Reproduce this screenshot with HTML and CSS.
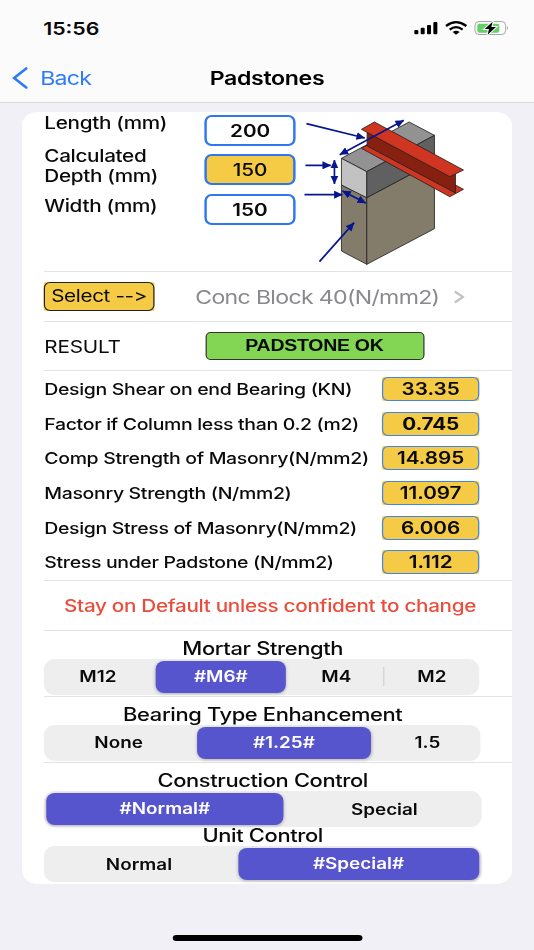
FILE: index.html
```html
<!DOCTYPE html>
<html lang="en">
<head>
  <meta charset="utf-8">
  <title>Padstones</title>
  <link rel="stylesheet" href="styles.css">
</head>
<body>
  <div class="screen">
    <header>
      <div class="status-bar">
        <span class="time">15:56</span>
        <svg class="status-icons" viewBox="435 60 295 48" preserveAspectRatio="none">
          <rect x="441" y="90" width="12" height="13" rx="3"/>
          <rect x="460" y="83" width="12" height="20" rx="3"/>
          <rect x="479" y="75" width="12" height="28" rx="3"/>
          <rect x="498" y="66" width="12" height="37" rx="3"/>
          <g fill="none" stroke="#000" stroke-width="7">
            <path d="M536 78 Q566 55 597 78"/>
            <path d="M547 89 Q566 74 586 89"/>
          </g>
          <path d="M556 96 Q566 88 577 96 L566 104 Z"/>
          <rect x="623" y="64.500" width="92" height="39" rx="12" fill="none" stroke="#a5a5a7" stroke-width="3"/>
          <rect x="630" y="71" width="66" height="27" rx="6" fill="#65cf68"/>
          <path d="M719 78 Q725 84 719 90 Z" fill="#a5a5a7"/>
          <path d="M676 65 L652 87 H665 L661 104 L686 81 H672 Z" stroke="#fbfbfc" stroke-width="6" paint-order="stroke"/>
        </svg>
      </div>
      <nav>
        <a class="back" href="#">
          <svg viewBox="0 0 16 22" preserveAspectRatio="none"><path d="M14.200 1.500 L2 11 L14.200 20.500"/></svg>
          <span>Back</span>
        </a>
        <h1>Padstones</h1>
      </nav>
    </header>

    <main class="card">
      <section class="sizes">
        <div class="size-labels">
          <label for="length">Length (mm)</label>
          <label for="depth">Calculated<br>Depth (mm)</label>
          <label for="width">Width (mm)</label>
        </div>
        <div class="size-inputs">
          <div class="field" id="length">200</div>
          <div class="field calculated" id="depth">150</div>
          <div class="field" id="width">150</div>
        </div>
        <svg class="diagram" viewBox="30 36 490 450" preserveAspectRatio="none">
          <defs>
            <marker id="arrow" viewBox="0 0 26 24" refX="25" refY="12" markerWidth="26" markerHeight="24" markerUnits="userSpaceOnUse" orient="auto-start-reverse">
              <path d="M0 0 L26 12 L0 24 Z" fill="#06168f"/>
            </marker>
          </defs>
          <g stroke="#222" stroke-width="2.500" stroke-linejoin="round">
            <!-- masonry -->
            <path d="M142 240 L218 278 V478 L142 438 Z" fill="#847c6a"/>
            <path d="M218 278 L421 170 V371 L218 478 Z" fill="#847c6a"/>
            <!-- padstone -->
            <path d="M142 160 L345 51 L421 91 L218 200 Z" fill="#929292"/>
            <path d="M142 160 L218 200 V278 L142 240 Z" fill="#c2c2c2"/>
            <path d="M218 200 L421 91 V170 L218 278 Z" fill="#606060"/>
            <!-- steel beam -->
            <path d="M202 130 L241 109 L508 253 L467 275 Z" fill="#cf3520"/>
            <path d="M219 82 L484 206 V264 L219 123 Z" fill="#862112"/>
            <path d="M202 73 L241 51 L508 195 L467 215 Z" fill="#cf3520"/>
          </g>
          <g stroke="#06168f" stroke-width="5" fill="none">
            <path d="M37 56 L212 99" marker-end="url(#arrow)"/>
            <path d="M34 181 H110" marker-end="url(#arrow)"/>
            <path d="M31 269 H145" marker-end="url(#arrow)"/>
            <path d="M76 470 L180 353" marker-end="url(#arrow)"/>
            <path d="M137 149 L329 46" marker-start="url(#arrow)" marker-end="url(#arrow)"/>
            <path d="M121 165 V237" marker-start="url(#arrow)" marker-end="url(#arrow)"/>
            <path d="M145 258 L215 294" marker-start="url(#arrow)" marker-end="url(#arrow)"/>
          </g>
        </svg>
      </section>

      <section class="material">
        <div class="select"><span>Select --&gt;</span></div>
        <span class="material-name">Conc Block 40(N/mm2)</span>
        <svg class="chevron" viewBox="0 0 10 14" preserveAspectRatio="none"><path d="M1 1.500 L9 7 L1 12.500"/></svg>
      </section>

      <section class="result">
        <span class="result-label">RESULT</span>
        <span class="result-value">PADSTONE OK</span>
      </section>

      <section class="values">
        <div class="row"><span>Design Shear on end Bearing (KN)</span><div class="value"><b>33.35</b></div></div>
        <div class="row"><span>Factor if Column less than 0.2 (m2)</span><div class="value heavy"><b>0.745</b></div></div>
        <div class="row"><span>Comp Strength of Masonry(N/mm2)</span><div class="value"><b>14.895</b></div></div>
        <div class="row"><span>Masonry Strength (N/mm2)</span><div class="value"><b>11.097</b></div></div>
        <div class="row"><span>Design Stress of Masonry(N/mm2)</span><div class="value"><b>6.006</b></div></div>
        <div class="row"><span>Stress under Padstone (N/mm2)</span><div class="value"><b>1.112</b></div></div>
      </section>

      <section class="warning">Stay on Default unless confident to change</section>

      <section class="option">
        <h2>Mortar Strength</h2>
        <div class="segments mortar">
          <span>M12</span>
          <span class="selected">#M6#</span>
          <span class="divided">M4</span>
          <span>M2</span>
        </div>
      </section>

      <section class="option">
        <h2>Bearing Type Enhancement</h2>
        <div class="segments bearing">
          <span>None</span>
          <span class="selected">#1.25#</span>
          <span>1.5</span>
        </div>
      </section>

      <section class="option last">
        <h2>Construction Control</h2>
        <div class="segments construction">
          <span class="selected">#Normal#</span>
          <span>Special</span>
        </div>
        <h2 class="unit-title">Unit Control</h2>
        <div class="segments unit">
          <span>Normal</span>
          <span class="selected">#Special#</span>
        </div>
      </section>
    </main>

    <div class="home-indicator"></div>
  </div>
</body>
</html>
```
FILE: styles.css
```css
* {
  box-sizing: border-box;
}

body {
  margin: 0;
  background-color: #f1f0f6;
  font-family: Inter, "Liberation Sans", sans-serif;
  color: #0a0a0a;
  overflow: hidden;
}

/* the phone screen is shown wider than its natural shape */
.screen {
  width: 439px;
  height: 950px;
  transform: scaleX(1.2164);
  transform-origin: 0 0;
  display: flex;
  flex-direction: column;
  align-items: center;
}

header {
  width: 100%;
  height: 103px;
  background-color: #fbfbfc;
  border-bottom: 1px solid #d9d9dc;
}

.status-bar {
  height: 56px;
  padding: 0 19.5px 0 35.5px;
  display: flex;
  align-items: center;
  justify-content: space-between;
}

.time {
  font-size: 17.5px;
  font-weight: 600;
}

.status-icons {
  width: 80.8px;
  height: 16px;
}

nav {
  height: 44px;
  padding-left: 10px;
  display: grid;
  grid-template-columns: 119.5px 180px 1fr;
  align-items: center;
}

.back {
  display: flex;
  align-items: center;
  gap: 10px;
  color: #2f7cf6;
  text-decoration: none;
  font-size: 19px;
  letter-spacing: -0.6px;
}

.back svg {
  width: 13px;
  height: 22px;
  fill: none;
  stroke: #2f7cf6;
  stroke-width: 2.8;
  stroke-linecap: round;
}

h1 {
  margin: 0;
  font-size: 19px;
  font-weight: 600;
  letter-spacing: -0.27px;
  text-align: center;
  color: #000;
}

.card {
  width: 403px;
  height: 772px;
  margin-top: 9px;
  padding-left: 18px;
  background-color: #fff;
  border-radius: 13px / 14px;
}

section {
  border-bottom: 1px solid #e3e3e5;
}

.sizes {
  height: 160px;
  display: flex;
}

.size-labels {
  width: 131.8px;
  padding: 1px 0 0 0.4px;
  display: flex;
  flex-direction: column;
  gap: 12.5px;
  font-size: 17px;
  font-weight: 500;
  letter-spacing: -0.25px;
  line-height: 20px;
}

.size-labels label:last-child {
  margin-top: -2px;
}

.size-inputs {
  width: 75.6px;
  padding-top: 3px;
  display: flex;
  flex-direction: column;
  gap: 8.3px;
}

.field {
  height: 31px;
  border: 2px solid #2e77f0;
  border-radius: 6px / 7px;
  font-size: 17px;
  font-weight: 600;
  line-height: 28px;
  text-align: center;
}

.calculated {
  background-color: #f5cb46;
  font-weight: 500;
}

.diagram {
  width: 134.3px;
  height: 150px;
  margin: 5px 0 0 7px;
}

.material {
  height: 49.5px;
  padding-top: 1px;
  display: flex;
  align-items: center;
}

/* square fill shows behind the rounded outline */
.select,
.value {
  background-color: #f5cb46;
  border-radius: 2px;
}

.select span {
  display: block;
  width: 91px;
  height: 29px;
  border: 1.5px solid #222;
  border-radius: 5px / 6px;
  font-size: 17px;
  font-feature-settings: "calt" 0;
  font-variant-ligatures: none;
  letter-spacing: -0.3px;
  line-height: 27px;
  text-align: center;
}

.material-name {
  width: 202px;
  margin-left: 33.5px;
  padding-top: 1px;
  font-size: 19px;
  letter-spacing: -0.56px;
  color: #8a8a8e;
  white-space: nowrap;
}

.chevron {
  width: 8.5px;
  height: 14px;
  margin-left: 10.5px;
  fill: none;
  stroke: #c2c2c5;
  stroke-width: 2.2;
}

.result {
  height: 49.5px;
  padding-top: 1px;
  display: flex;
  align-items: center;
}

.result-label {
  width: 132.5px;
  padding: 1px 0 0 0.4px;
  font-size: 17px;
  letter-spacing: -0.15px;
}

.result-value {
  width: 180px;
  height: 28px;
  background-color: #82d653;
  border: 1.5px solid #333;
  border-radius: 4px / 5px;
  font-family: "Liberation Sans", sans-serif;
  font-size: 16px;
  font-weight: 700;
  letter-spacing: -0.2px;
  line-height: 26px;
  text-align: center;
}

.values {
  height: 210px;
  padding-top: 1px;
}

.row {
  height: 34.6px;
  display: flex;
  align-items: center;
  justify-content: space-between;
  padding: 0 27px 0 0.4px;
  font-size: 16px;
  font-weight: 500;
  letter-spacing: -0.27px;
  white-space: nowrap;
}

.value b {
  display: block;
  width: 80px;
  height: 24px;
  border: 1px solid #3f86ea;
  border-radius: 5px / 6px;
  font-size: 17px;
  font-weight: 600;
  letter-spacing: 0;
  line-height: 23px;
  text-align: center;
}

.heavy b {
  font-weight: 700;
  letter-spacing: -0.2px;
}

.warning {
  height: 49.5px;
  padding-right: 13px;
  font-size: 17px;
  font-weight: 500;
  letter-spacing: -0.25px;
  line-height: 50px;
  text-align: center;
  color: #eb4d3d;
  white-space: nowrap;
}

.option {
  height: 66.3px;
  padding-top: 7px;
}

.last {
  border-bottom: none;
}

h2 {
  width: 360px;
  margin: 0;
  font-size: 18px;
  font-weight: 500;
  letter-spacing: -0.3px;
  line-height: 21px;
  text-align: center;
  color: #0a0a0a;
}

.unit-title {
  margin-top: -2px;
}

.segments {
  height: 36px;
  display: grid;
  align-items: center;
  background-color: #eeeeef;
  border-radius: 9px / 11px;
  font-size: 15.5px;
  font-weight: 600;
  text-align: center;
}

.mortar {
  width: 358px;
  grid-template-columns: 91px 109px 80px 78px;
}

.bearing {
  width: 359px;
  grid-template-columns: 125px 144.8px 89.2px;
}

.segments span:first-child:not(.selected) {
  padding-right: 2px;
}

.segments .selected + span {
  padding-left: 2px;
}

.construction {
  width: 360px;
  grid-template-columns: 198px 162px;
}

.unit {
  width: 360px;
  grid-template-columns: 158.5px 201.5px;
}

.selected {
  height: 32px;
  margin: 0 1px;
  border-radius: 7px / 8px;
  background-color: #5755ce;
  box-shadow: 0 1px 3px rgba(0, 0, 0, 0.25);
  line-height: 32px;
  color: #fff;
}

.selected:first-child {
  margin-left: 2px;
}

.selected:last-child {
  margin-right: 2px;
}

.divided {
  border-right: 1px solid #d2d2d5;
}

.home-indicator {
  width: 156px;
  height: 6px;
  margin-top: 50.5px;
  border-radius: 3px;
  background-color: #000;
}
```
